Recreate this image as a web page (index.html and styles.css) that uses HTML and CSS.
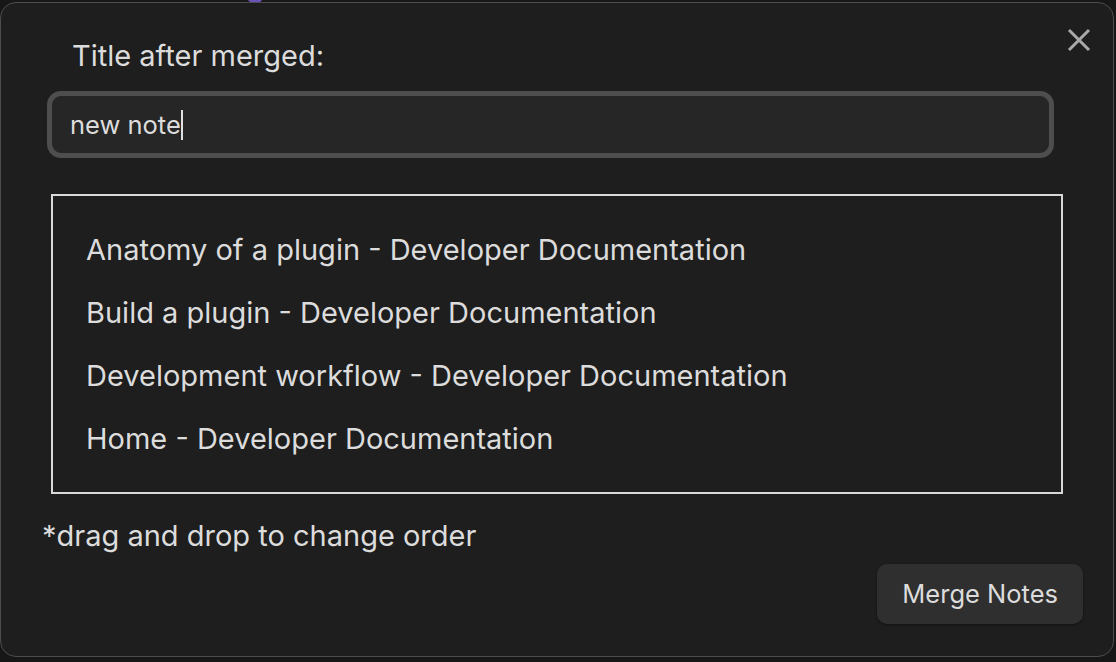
FILE: index.html
```html
<!DOCTYPE html>
<html>
<head>
<meta charset="utf-8">
<link rel="stylesheet" href="styles.css">
</head>
<body>
<div class="blob"></div>
<div class="modal">
  <button class="close" aria-label="Close">
    <svg width="24" height="24" viewBox="0 0 24 24"><path d="M2 2 L22 22 M22 2 L2 22" stroke="#a9a9a9" stroke-width="3" fill="none"/></svg>
  </button>
  <div class="title">Title after merged:</div>
  <div class="input"><span>new note</span><span class="caret"></span></div>
  <ul class="list">
    <li>Anatomy of a plugin - Developer Documentation</li>
    <li>Build a plugin - Developer Documentation</li>
    <li>Development workflow - Developer Documentation</li>
    <li>Home - Developer Documentation</li>
  </ul>
  <div class="hint">*drag and drop to change order</div>
  <div class="actions"><button class="btn">Merge Notes</button></div>
</div>
</body>
</html>
```
FILE: styles.css
```css
html, body {
  margin: 0;
  padding: 0;
  background: #171717;
  width: 1116px;
  height: 662px;
  overflow: hidden;
  font-family: Inter, "Noto Sans", sans-serif;
  font-size: 29px;
  color: #dcdcdc;
}
.blob {
  position: absolute;
  left: 248px;
  top: -4px;
  width: 14px;
  height: 7px;
  border-radius: 50%;
  background: #6b52b8;
}
.modal {
  position: relative;
  margin-top: 2px;
  width: 1112px;
  height: 653px;
  border: 1px solid #4c4c4c;
  border-radius: 16px;
  background: #1e1e1e;
  box-sizing: content-box;
  padding: 0;
}
.close {
  position: absolute;
  top: 25px;
  right: 22px;
  background: none;
  border: 0;
  padding: 0;
  width: 24px;
  height: 24px;
}
.close svg { display: block; }
.title {
  line-height: 34px;
  padding: 36px 0 0 71px;
}
.input {
  margin: 18px 0 0 46px;
  width: 979px;
  height: 57px;
  border: 5px solid #4e4e4e;
  border-radius: 14px;
  background: #262626;
  display: flex;
  align-items: center;
  padding-left: 18px;
  box-sizing: content-box;
  font-size: 25.5px;
  line-height: 34px;
}
.caret {
  display: inline-block;
  width: 2px;
  height: 30px;
  background: #e0e0e0;
}
.list {
  list-style: none;
  margin: 36px 0 0 50px;
  padding: 22px 0 22px 33px;
  width: 975px;
  border: 2px solid #d9d9d9;
}
.list li {
  line-height: 63px;
}
.hint {
  margin: 25px 0 0 41px;
  line-height: 34px;
}
.actions {
  display: flex;
  justify-content: flex-end;
  padding-right: 30px;
  margin-top: 11px;
}
.btn {
  font: inherit;
  font-size: 25.5px;
  color: #dcdcdc;
  background: #2f2f2f;
  border: 0;
  border-radius: 10px;
  height: 60px;
  padding: 0 25px;
  line-height: 34px;
  box-shadow: 0 1px 3px rgba(0,0,0,0.45);
}
```
